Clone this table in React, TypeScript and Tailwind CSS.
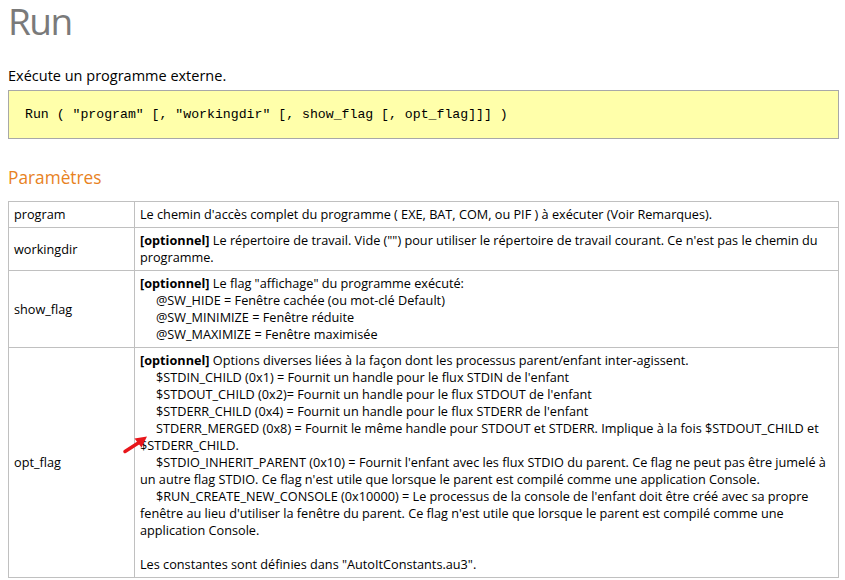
import React from "react";

const F = { fontFamily: '"Open Sans", "Noto Sans", sans-serif' };

function Row({ name, children }: { name: string; children: React.ReactNode }) {
  return (
    <tr>
      <td className="w-[126px] border border-[#c0c0c0] pl-[5px] pr-1 py-1 align-middle">{name}</td>
      <td className="border border-[#c0c0c0] pl-[5px] pr-1 py-1 align-top">{children}</td>
    </tr>
  );
}

export default function App() {
  return (
    <div className="relative min-h-[580px] bg-white text-black" style={F}>
      <div className="ml-2 w-[831px]">
        <h1 className="text-[37px] leading-[41px] font-normal tracking-[-1.5px] text-[#7a7a7a]">Run</h1>
        <p className="mt-[25px] text-[14.5px] leading-[19px]">Exécute un programme externe.</p>
        <div className="mt-[5px] h-[49px] border border-[#a8a8a8] bg-[#ffffaa] pl-4 pt-[15px]">
          <pre className="text-[13.2px] leading-[17px]" style={{ fontFamily: '"Liberation Mono", "Courier New", monospace' }}>
            Run ( "program" [, "workingdir" [, show_flag [, opt_flag]]] )
          </pre>
        </div>
        <h2 className="mt-[27px] text-[17.3px] leading-[24px] font-normal text-[#e8821e]">Paramètres</h2>
        <table className="mt-[11px] w-full border-collapse text-[12.7px] leading-[17px]">
          <tbody>
            <Row name="program">
              Le chemin d'accès complet du programme ( EXE, BAT, COM, ou PIF ) à exécuter (Voir Remarques).
            </Row>
            <Row name="workingdir">
              <b className="font-bold">[optionnel]</b> Le répertoire de travail. Vide ("") pour utiliser le répertoire de travail courant. Ce n'est pas le chemin du programme.
            </Row>
            <Row name="show_flag">
              <div><b className="font-bold">[optionnel]</b> Le flag "affichage" du programme exécuté:</div>
              <div className="indent-4">@SW_HIDE = Fenêtre cachée (ou mot-clé Default)</div>
              <div className="indent-4">@SW_MINIMIZE = Fenêtre réduite</div>
              <div className="indent-4">@SW_MAXIMIZE = Fenêtre maximisée</div>
            </Row>
            <Row name="opt_flag">
              <div><b className="font-bold">[optionnel]</b> Options diverses liées à la façon dont les processus parent/enfant inter-agissent.</div>
              <div className="indent-4">$STDIN_CHILD (0x1) = Fournit un handle pour le flux STDIN de l'enfant</div>
              <div className="indent-4">$STDOUT_CHILD (0x2)= Fournit un handle pour le flux STDOUT de l'enfant</div>
              <div className="indent-4">$STDERR_CHILD (0x4) = Fournit un handle pour le flux STDERR de l'enfant</div>
              <div className="indent-4">STDERR_MERGED (0x8) = Fournit le même handle pour STDOUT et STDERR. Implique à la fois $STDOUT_CHILD et $STDERR_CHILD.</div>
              <div className="indent-4">$STDIO_INHERIT_PARENT (0x10) = Fournit l'enfant avec les flux STDIO du parent. Ce flag ne peut pas être jumelé à un autre flag STDIO. Ce flag n'est utile que lorsque le parent est compilé comme une application Console.</div>
              <div className="indent-4">$RUN_CREATE_NEW_CONSOLE (0x10000) = Le processus de la console de l'enfant doit être créé avec sa propre fenêtre au lieu d'utiliser la fenêtre du parent. Ce flag n'est utile que lorsque le parent est compilé comme une application Console.</div>
              <div className="h-[17px]" />
              <div>Les constantes sont définies dans "AutoItConstants.au3".</div>
            </Row>
          </tbody>
        </table>
      </div>
      <svg className="absolute left-[118px] top-[428px]" width="40" height="26" viewBox="0 0 40 26">
        <line x1="7" y1="23.5" x2="21" y2="14.5" stroke="#e8161b" strokeWidth="3.5" strokeLinecap="round" />
        <polygon points="29,8.5 16.5,10.5 23.5,19.5" fill="#e8161b" />
      </svg>
    </div>
  );
}
